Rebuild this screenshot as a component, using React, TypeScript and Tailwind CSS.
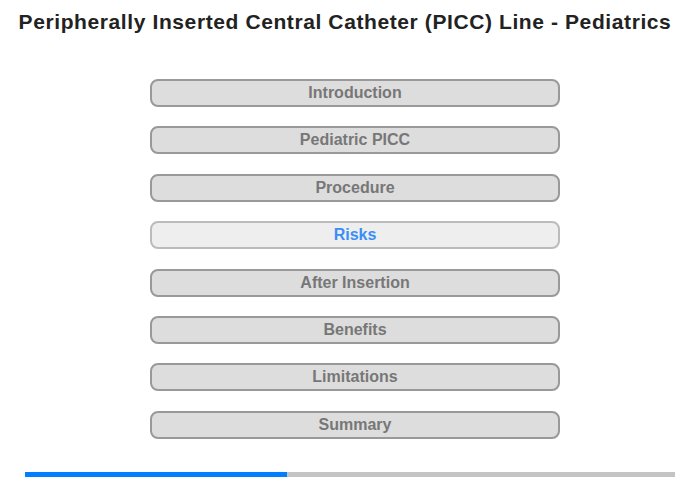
import React from 'react';

const sections = [
  'Introduction',
  'Pediatric PICC',
  'Procedure',
  'Risks',
  'After Insertion',
  'Benefits',
  'Limitations',
  'Summary',
];

const active = 'Risks';

export default function App() {
  return (
    <div className="w-[700px] h-[480px] bg-white flex flex-col items-center font-['Liberation_Sans',Arial,sans-serif]">
      <h1 className="pt-[10px] mr-[10px] text-[21px] leading-[24px] tracking-[0.6px] font-bold text-[#222]">
        Peripherally Inserted Central Catheter (PICC) Line - Pediatrics
      </h1>

      <div className="mt-[45px] ml-[10px] flex flex-col gap-[19.4px]">
        {sections.map((s) =>
          s === active ? (
            <button
              key={s}
              className="w-[410px] h-[28px] rounded-[8px] border-2 border-[#bbbbbb] bg-[#eeeeee] text-[16px] font-bold text-[#3a8ef6]"
            >
              {s}
            </button>
          ) : (
            <button
              key={s}
              className="w-[410px] h-[28px] rounded-[8px] border-2 border-[#999999] bg-[#dddddd] text-[16px] font-bold text-[#777777]"
            >
              {s}
            </button>
          )
        )}
      </div>

      <div className="mt-auto mb-[3px] w-[650px] h-[5px] bg-[#c4c4c4] flex">
        <div className="w-[262px] h-full bg-[#0080ff]" />
      </div>
    </div>
  );
}
